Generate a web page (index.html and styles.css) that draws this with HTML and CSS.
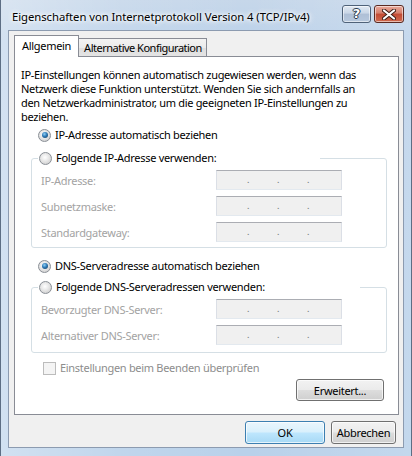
FILE: index.html
```html
<!DOCTYPE html>
<html lang="de">
<head>
<meta charset="utf-8">
<title>Eigenschaften von Internetprotokoll Version 4 (TCP/IPv4)</title>
<link rel="stylesheet" href="styles.css">
</head>
<body>
<div class="window">
  <div class="titlebar">
    <div class="title">Eigenschaften von Internetprotokoll Version 4 (TCP/IPv4)</div>
    <div class="capbtns">
      <div class="capbtn help"><span>?</span></div>
      <div class="capbtn close">
        <svg width="14" height="11" viewBox="0 0 14 11"><path d="M2 1.5 L12 9.5 M12 1.5 L2 9.5" stroke="#3a1b14" stroke-width="4" stroke-linecap="round"/><path d="M2 1.5 L12 9.5 M12 1.5 L2 9.5" stroke="#ffffff" stroke-width="2.2" stroke-linecap="round"/></svg>
      </div>
    </div>
  </div>
  <div class="client">
    <div class="tabs">
      <div class="tab active">Allgemein</div>
      <div class="tab">Alternative Konfiguration</div>
    </div>
    <div class="panel">
      <p class="intro">IP-Einstellungen können automatisch zugewiesen werden, wenn das<br>Netzwerk diese Funktion unterstützt. Wenden Sie sich andernfalls an<br>den Netzwerkadministrator, um die geeigneten IP-Einstellungen zu<br>beziehen.</p>

      <div class="option first"><span class="radio checked"></span><span>IP-Adresse automatisch beziehen</span></div>

      <fieldset class="group">
        <legend class="option legend ip"><span class="radio"></span><span>Folgende IP-Adresse verwenden:</span></legend>
        <div class="row"><span class="lbl">IP-Adresse:</span><span class="ipbox"><i>.</i><i>.</i><i>.</i></span></div>
        <div class="row"><span class="lbl">Subnetzmaske:</span><span class="ipbox"><i>.</i><i>.</i><i>.</i></span></div>
        <div class="row"><span class="lbl">Standardgateway:</span><span class="ipbox"><i>.</i><i>.</i><i>.</i></span></div>
      </fieldset>

      <div class="option second"><span class="radio checked"></span><span>DNS-Serveradresse automatisch beziehen</span></div>

      <fieldset class="group dns">
        <legend class="option legend dnsl"><span class="radio"></span><span>Folgende DNS-Serveradressen verwenden:</span></legend>
        <div class="row"><span class="lbl">Bevorzugter DNS-Server:</span><span class="ipbox"><i>.</i><i>.</i><i>.</i></span></div>
        <div class="row"><span class="lbl">Alternativer DNS-Server:</span><span class="ipbox"><i>.</i><i>.</i><i>.</i></span></div>
      </fieldset>

      <div class="check"><span class="box"></span><span>Einstellungen beim Beenden überprüfen</span></div>

      <div class="advrow"><div class="btn">Erweitert...</div></div>
    </div>
    <div class="footer">
      <div class="btn default">OK</div>
      <div class="btn">Abbrechen</div>
    </div>
  </div>
</div>
</body>
</html>
```

FILE: styles.css
```css
* { box-sizing: border-box; }
html, body { margin: 0; padding: 0; }
body {
  width: 412px;
  height: 456px;
  overflow: hidden;
  font-family: "Noto Sans", "Open Sans", sans-serif;
  font-size: 11px;
  letter-spacing: -0.3px;
  color: #000;
  background: #b9d1ea;
}
.window {
  width: 412px;
  height: 456px;
  display: flex;
  flex-direction: column;
  padding: 0 7px 8px 7px;
  border-left: 1px solid #5d6e84;
  border-right: 1px solid #5d6e84;
  background:
    linear-gradient(to right, rgba(255,255,255,0.35) 0, rgba(255,255,255,0.1) 30%, rgba(255,255,255,0) 60%, rgba(255,255,255,0.15) 100%),
    linear-gradient(to bottom, #c6d7ea 0, #bcd2ea 40px, #b9d1ea 100%);
}
.titlebar {
  height: 30px;
  display: flex;
  align-items: flex-start;
  justify-content: space-between;
  flex: none;
}
.title {
  margin: 9px 0 0 4px;
  font-size: 11.3px;
  letter-spacing: -0.05px;
  line-height: 16px;
  white-space: nowrap;
  text-shadow: 0 0 6px #fff, 0 0 6px #fff, 0 0 3px #fff;
}
.capbtns {
  display: flex;
  gap: 3px;
  margin: 5px 0 0 0;
}
.capbtn {
  height: 18px;
  width: 30px;
  border: 1px solid #4f6279;
  border-radius: 3px;
  display: flex;
  align-items: center;
  justify-content: center;
  box-shadow: inset 0 0 0 1px rgba(255,255,255,0.55);
}
.help {
  width: 29px;
  background: linear-gradient(to bottom, #e1e9f3 0, #c9d6e6 45%, #aebfd6 50%, #b7c8dd 100%);
}
.help span {
  font-family: "DejaVu Sans", sans-serif;
  font-weight: bold;
  font-size: 13px;
  color: #fff;
  line-height: 14px;
  letter-spacing: 0;
  text-shadow: 0 0 1px #2c3b4f, 1px 0 0 #2c3b4f, -1px 0 0 #2c3b4f, 0 1px 0 #2c3b4f, 0 -1px 0 #2c3b4f;
}
.close {
  background: linear-gradient(to bottom, #e9a99b 0, #d47f6c 45%, #c24a33 50%, #cf6a4f 100%);
  border-color: #5a2a22;
}
.client {
  flex: 1;
  background: #f0f0f0;
  border: 1px solid #8c9bb0;
  display: flex;
  flex-direction: column;
  padding: 4px 4px 0 4px;
}
.tabs {
  display: flex;
  align-items: flex-end;
  height: 21px;
  margin-left: 1px;
  position: relative;
  z-index: 1;
}
.tab {
  height: 18px;
  padding: 0 4px 0 5px;
  border: 1px solid #898c95;
  border-bottom: none;
  border-left: none;
  line-height: 17px;
  letter-spacing: -0.5px;
  background: linear-gradient(to bottom, #f3f3f3 0, #ebebeb 50%, #dedede 50%, #e4e4e4 100%);
}
.tab.active {
  padding: 0 7px 0 7px;
  border-left: 1px solid #898c95;
  background: #fff;
  margin-bottom: -1px;
  height: 22px;
  line-height: 20px;
  letter-spacing: -0.3px;
}
.panel {
  background: #fff;
  border: 1px solid #898c95;
  height: 359px;
  margin-left: 1px;
  padding: 11px 14px 0 6px;
  display: flex;
  flex-direction: column;
}
.intro {
  margin: 0;
  line-height: 14px;
  white-space: nowrap;
}
.option {
  display: flex;
  align-items: center;
  gap: 4px;
  height: 14px;
  line-height: 14px;
  white-space: nowrap;
  padding-left: 17px;
}
.option.first { margin-top: 4px; }
.option.second { margin-top: 11px; }
.radio {
  width: 13px;
  height: 13px;
  border-radius: 50%;
  border: 1px solid #8a8f96;
  background: radial-gradient(circle at 45% 40%, #ffffff 0, #e6e6e6 45%, #c4c4c4 100%);
  position: relative;
  flex: none;
}
.radio.checked::after {
  content: "";
  position: absolute;
  left: 2.5px;
  top: 2.5px;
  width: 6px;
  height: 6px;
  border-radius: 50%;
  background: radial-gradient(circle at 40% 35%, #8fd0f7 0, #2d79b5 45%, #143553 100%);
}
.group {
  margin: 9px 0 0 10px;
  padding: 5px 0 5px 6px;
  border: 1px solid #d5dfe5;
  border-radius: 3px;
  width: 356px;
}
.group.dns { margin-top: 7px; padding-bottom: 7px; }
.legend {
  padding: 0 0 0 1px;
  background: #fff;
}
.legend.ip { width: 282px; }
.legend.dnsl { width: 322px; }
.row {
  display: flex;
  align-items: center;
  height: 20px;
  margin-top: 6px;
  padding-left: 3px;
}
legend + .row { margin-top: 0; }
.lbl {
  width: 175px;
  color: #a3a3a3;
  white-space: nowrap;
}
.ipbox {
  width: 126px;
  height: 20px;
  background: #f0f0f0;
  border: 1px solid #dbdfe6;
  border-top-color: #abadb3;
  border-bottom-color: #e3e9ef;
  display: flex;
  padding-left: 30px;
  gap: 24px;
  color: #6d6d6d;
  font-size: 9px;
  line-height: 18px;
}
.ipbox i { font-style: normal; width: 6px; }
.check {
  display: flex;
  align-items: center;
  gap: 4px;
  margin: 8px 0 0 22px;
  height: 14px;
  line-height: 14px;
  color: #8d8d8d;
  white-space: nowrap;
}
.box {
  width: 13px;
  height: 13px;
  border: 1px solid #bcbcbc;
  background: #f4f4f4;
  flex: none;
}
.advrow {
  display: flex;
  justify-content: flex-end;
  margin-top: 4px;
}
.btn {
  width: 88px;
  height: 22px;
  border: 1px solid #707070;
  border-radius: 3px;
  display: flex;
  align-items: center;
  justify-content: center;
  background: linear-gradient(to bottom, #f2f2f2 0, #ebebeb 48%, #dddddd 52%, #cfcfcf 100%);
  box-shadow: inset 0 0 0 1px rgba(255,255,255,0.7);
  white-space: nowrap;
}
.footer {
  display: flex;
  justify-content: flex-end;
  gap: 6px;
  margin-top: 6px;
  padding-right: 3px;
}
.footer .btn { width: 80px; height: 23px; }
.footer .btn + .btn { width: 65px; }
.btn.default {
  border-color: #3c7fb1;
  background: linear-gradient(to bottom, #eaf6fd 0, #d9f0fc 48%, #bee6fd 52%, #a7d9f5 100%);
}
```
